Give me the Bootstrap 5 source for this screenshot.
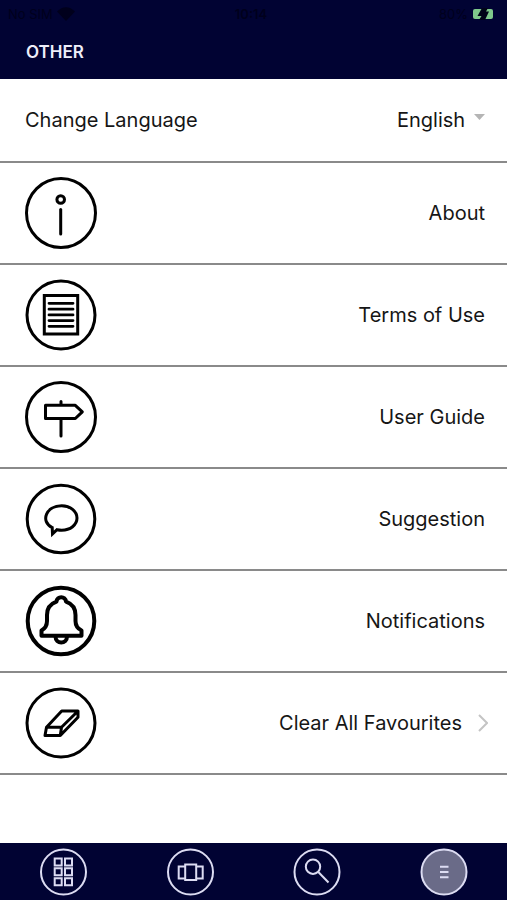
<!DOCTYPE html>
<html lang="en">
<head>
<meta charset="utf-8">
<meta name="viewport" content="width=device-width, initial-scale=1">
<title>Other</title>
<link href="https://cdn.jsdelivr.net/npm/bootstrap@5.3.0/dist/css/bootstrap.min.css" rel="stylesheet">
<style>
  body { font-family: Inter, "Liberation Sans", sans-serif; font-size: 20px; line-height: 24px; color: #161616; background: #fff; font-variation-settings: "opsz" 24; }
  .navy { background: #010333; }
  .status { height: 27px; padding: 0 13px 0 8px; font-size: 13px; color: #00001c; }
  .status svg, .icon, .tab svg { display: block; flex: none; }
  .title { height: 52px; padding: 13px 26px; font-size: 17px; line-height: 24px; font-weight: 600; color: #eeeefa; font-variation-settings: normal; }
  .setting { height: 102px; padding: 0 22px 0 25px; border-bottom: 2px solid #8a8a8a; color: inherit; }
  .setting-lang { height: 84px; }
  .setting-more { padding-right: 19px; }
  .icon { width: 72px; height: 72px; fill: none; stroke: #000; stroke-width: 3; }
  .lang { appearance: none; border: 0; padding: 0; background: none; color: inherit; font-variation-settings: inherit; }
  .tabs { padding: 5px 0 4px; }
  .tab svg { width: 48px; height: 48px; fill: none; stroke: #dcdcf2; stroke-width: 2; }
</style>
</head>
<body class="d-flex flex-column min-vh-100">
<header class="navy">
  <div class="status row g-0 align-items-center">
    <div class="col d-flex align-items-center gap-1">
      <span>No SIM</span>
      <svg width="18" height="14" viewBox="0 0 18 14" fill="#00001c"><path d="M9 14 0 4.500Q9-4 18 4.500Z"/></svg>
    </div>
    <div class="col-auto fw-semibold">10:14</div>
    <div class="col d-flex align-items-center justify-content-end gap-1">
      <span>80%</span>
      <svg width="22" height="12" viewBox="0 0 22 12"><rect x="1" y="1" width="20" height="10" rx="2" fill="#7fc98b"/><path d="M10 0h6l-2 3.500h3L13 12H7l2.500-4H5.500Z" fill="#010318"/></svg>
    </div>
  </div>
  <h1 class="title m-0">OTHER</h1>
</header>

<main class="flex-grow-1">
  <div class="setting setting-lang d-flex align-items-center justify-content-between">
    <label for="language">Change Language</label>
    <div class="d-flex align-items-center gap-2">
      <select id="language" class="lang"><option>English</option></select>
      <svg width="11" height="12" viewBox="0 0 11 12" fill="#b5b5b5" aria-hidden="true"><path d="M0 0h11L5.500 6Z"/></svg>
    </div>
  </div>
  <a href="#about" class="setting d-flex align-items-center justify-content-between text-decoration-none">
    <svg class="icon" viewBox="0 0 72 72"><circle cx="36" cy="36" r="34.500"/><circle cx="35.700" cy="22.500" r="3.800"/><path d="M35.700 32.500V57" stroke-linecap="round"/></svg>
    <span>About</span>
  </a>
  <a href="#terms" class="setting d-flex align-items-center justify-content-between text-decoration-none">
    <svg class="icon" viewBox="0 0 72 72"><circle cx="36" cy="36" r="34"/><path d="M19.300 16.500h33.400v38.500H19.300Z"/><path d="M24 24.300h24M24 30.200h24M24 35.900h24M24 41.600h24M24 47.300h24" stroke-linecap="round" stroke-width="2.800"/></svg>
    <span>Terms of Use</span>
  </a>
  <a href="#guide" class="setting d-flex align-items-center justify-content-between text-decoration-none">
    <svg class="icon" viewBox="0 0 72 72"><circle cx="36" cy="36" r="34.500"/><path d="M20.500 24.300h29.800l7 6.600-7 6.600H20.500ZM36 20.500v3.800M36 37.500v17.500" stroke-linecap="round" stroke-linejoin="round"/></svg>
    <span>User Guide</span>
  </a>
  <a href="#suggestion" class="setting d-flex align-items-center justify-content-between text-decoration-none">
    <svg class="icon" viewBox="0 0 72 72"><circle cx="36" cy="36" r="33.800"/><path d="M27.200 44.500C15 38.500 21 22.800 36.700 22.800c8.600 0 15.300 5.400 15.300 12.300S45.300 47.200 36.700 47.200q-2.200 0-4.700-.5L27.500 51Z"/></svg>
    <span>Suggestion</span>
  </a>
  <a href="#notifications" class="setting d-flex align-items-center justify-content-between text-decoration-none">
    <svg class="icon" viewBox="0 0 72 72" stroke-linejoin="round"><g stroke-width="4"><circle cx="36" cy="36" r="33.300"/><path d="M16.500 50.800V45.500C20 43.500 22 40 22 36V30c0-7 4-11.300 9.500-13.300C32 10.800 40.500 10.800 41 16.700 46.500 18.700 50.500 23 50.500 30v6c0 4 2 7.500 6 9.500v5.300Z"/><path d="M30.500 51.500c0 8 11.500 8 11.500 0"/></g></svg>
    <span>Notifications</span>
  </a>
  <a href="#clear" class="setting setting-more d-flex align-items-center justify-content-between text-decoration-none">
    <svg class="icon" viewBox="0 0 72 72"><circle cx="36" cy="36" r="34"/><path d="M21.500 40.200 36.700 24H53v6.200L35.300 48.500H20ZM21.500 40.200H36.500L53 24M36.500 40.200l-1.200 8.300" stroke-linejoin="round"/></svg>
    <span class="d-flex align-items-center gap-3">Clear All Favourites
      <svg width="10" height="18" viewBox="0 0 10 18" fill="none" stroke="#c4c4c4" stroke-width="2" aria-hidden="true"><path d="m1 1 8 8-8 8"/></svg>
    </span>
  </a>
</main>

<nav class="tabs navy row g-0 position-sticky bottom-0" aria-label="Main">
  <a href="#grid" class="tab col d-flex justify-content-center" aria-label="Grid"><svg viewBox="0 0 48 48"><circle cx="24.500" cy="24" r="22.500"/><path d="M15.700 10.500h7v7h-7ZM26 10.500h7v7h-7ZM15.700 20.300h7v7h-7ZM26 20.300h7v7h-7ZM15.700 30.200h7v7h-7ZM26 30.200h7v7h-7Z"/></svg></a>
  <a href="#gallery" class="tab col d-flex justify-content-center" aria-label="Gallery"><svg viewBox="0 0 48 48"><circle cx="24.500" cy="24" r="22.500"/><path d="M19.200 16.500h11v15.500h-11ZM19.200 18.500h-6.500v12h6.500M30.200 18.500h6.500v12h-6.500"/></svg></a>
  <a href="#search" class="tab col d-flex justify-content-center" aria-label="Search"><svg viewBox="0 0 48 48"><circle cx="24" cy="24" r="22.500"/><circle cx="20" cy="18.700" r="7.200"/><path d="m25.300 24 10.200 10.500"/></svg></a>
  <a href="#other" class="tab col d-flex justify-content-center" aria-label="Other" aria-current="page"><svg viewBox="0 0 48 48"><circle cx="24" cy="24" r="22.500" fill="#6a6b88"/><path d="M20 18.700h8.500M20 24h8.500M20 29.300h8.500"/></svg></a>
</nav>
<script src="https://cdn.jsdelivr.net/npm/bootstrap@5.3.0/dist/js/bootstrap.bundle.min.js"></script>
</body>
</html>
